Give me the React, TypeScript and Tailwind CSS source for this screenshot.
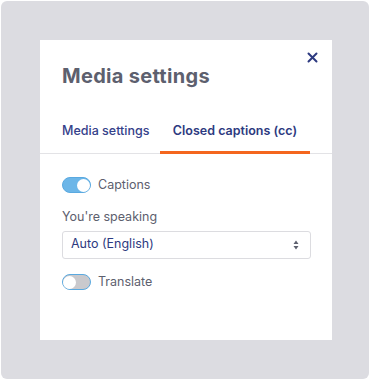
import React, { useState } from 'react';

const font = { fontFamily: 'Inter, "Noto Sans", sans-serif' };

const Toggle: React.FC<{ on: boolean; onChange: () => void }> = ({ on, onChange }) => (
  <button
    type="button"
    onClick={onChange}
    className={`relative w-[29px] h-[16px] rounded-full border-[1.5px] border-[#5aa9e0] flex items-center ${on ? 'bg-[#6cb6e8] justify-end' : 'bg-[#c9c9cd] justify-start'}`}
  >
    <span className="w-[13px] h-[13px] rounded-full bg-white block" />
  </button>
);

export default function App() {
  const [tab, setTab] = useState<'media' | 'cc'>('cc');
  const [captions, setCaptions] = useState(true);
  const [translate, setTranslate] = useState(false);

  return (
    <div className="w-[370px] h-[380px] bg-white p-px" style={font}>
      <div className="w-full h-full bg-[#dcdce1] rounded-[6px] pt-[39px] pl-[39px]">
        <div className="w-[292px] h-[300px] bg-white flex flex-col">
          <div className="relative pt-[24px] px-[22px]">
            <h2 className="text-[20px] font-bold text-[#5d606e] tracking-[0.3px] leading-[24px]">Media settings</h2>
            <button type="button" className="absolute right-[14px] top-[12px] text-[#2d3a80]">
              <svg width="11" height="11" viewBox="0 0 11 11" fill="none" stroke="currentColor" strokeWidth="2" strokeLinecap="round">
                <path d="M1.5 1.5l8 8M9.5 1.5l-8 8" />
              </svg>
            </button>
          </div>

          <div className="mt-[34px] flex border-b border-[#e3e3e6] pl-[22px]">
            <button
              type="button"
              onClick={() => setTab('media')}
              className={`relative w-[98px] text-left whitespace-nowrap pb-[13px] text-[12.5px] leading-[18px] text-[#34418a] ${tab === 'media' ? 'font-semibold' : 'font-medium'}`}
            >
              Media settings
              {tab === 'media' && <span className="absolute left-0 right-[14px] -bottom-px h-[3px] bg-[#f4661e]" />}
            </button>
            <button
              type="button"
              onClick={() => setTab('cc')}
              className={`relative w-[150px] whitespace-nowrap pb-[13px] text-[12.5px] leading-[18px] text-[#2d3a80] ${tab === 'cc' ? 'font-semibold' : 'font-medium'}`}
            >
              Closed captions (cc)
              {tab === 'cc' && <span className="absolute left-0 right-0 -bottom-px h-[3px] bg-[#f4661e]" />}
            </button>
          </div>

          <div className="px-[22px] pt-[22px] flex flex-col">
            <div className="flex items-center gap-[7px]">
              <Toggle on={captions} onChange={() => setCaptions(!captions)} />
              <span className="text-[12.5px] text-[#5d606e]">Captions</span>
            </div>

            <label className="mt-[14px] text-[12.5px] text-[#5d606e] leading-[16px]">You're speaking</label>
            <div className="mt-[6px] relative w-[249px] h-[28px] border border-[#dcdce0] rounded-[3px] flex items-center px-[8px]">
              <span className="text-[12.5px] text-[#2d3a80]">Auto (English)</span>
              <svg className="absolute right-[11px]" width="6" height="10" viewBox="0 0 6 10" fill="#5d606e">
                <path d="M3 0.5L5.5 4H0.5z M3 9.5L0.5 6h5z" />
              </svg>
            </div>

            <div className="mt-[14px] flex items-center gap-[7px]">
              <Toggle on={translate} onChange={() => setTranslate(!translate)} />
              <span className="text-[12.5px] text-[#5d606e]">Translate</span>
            </div>
          </div>
        </div>
      </div>
    </div>
  );
}
